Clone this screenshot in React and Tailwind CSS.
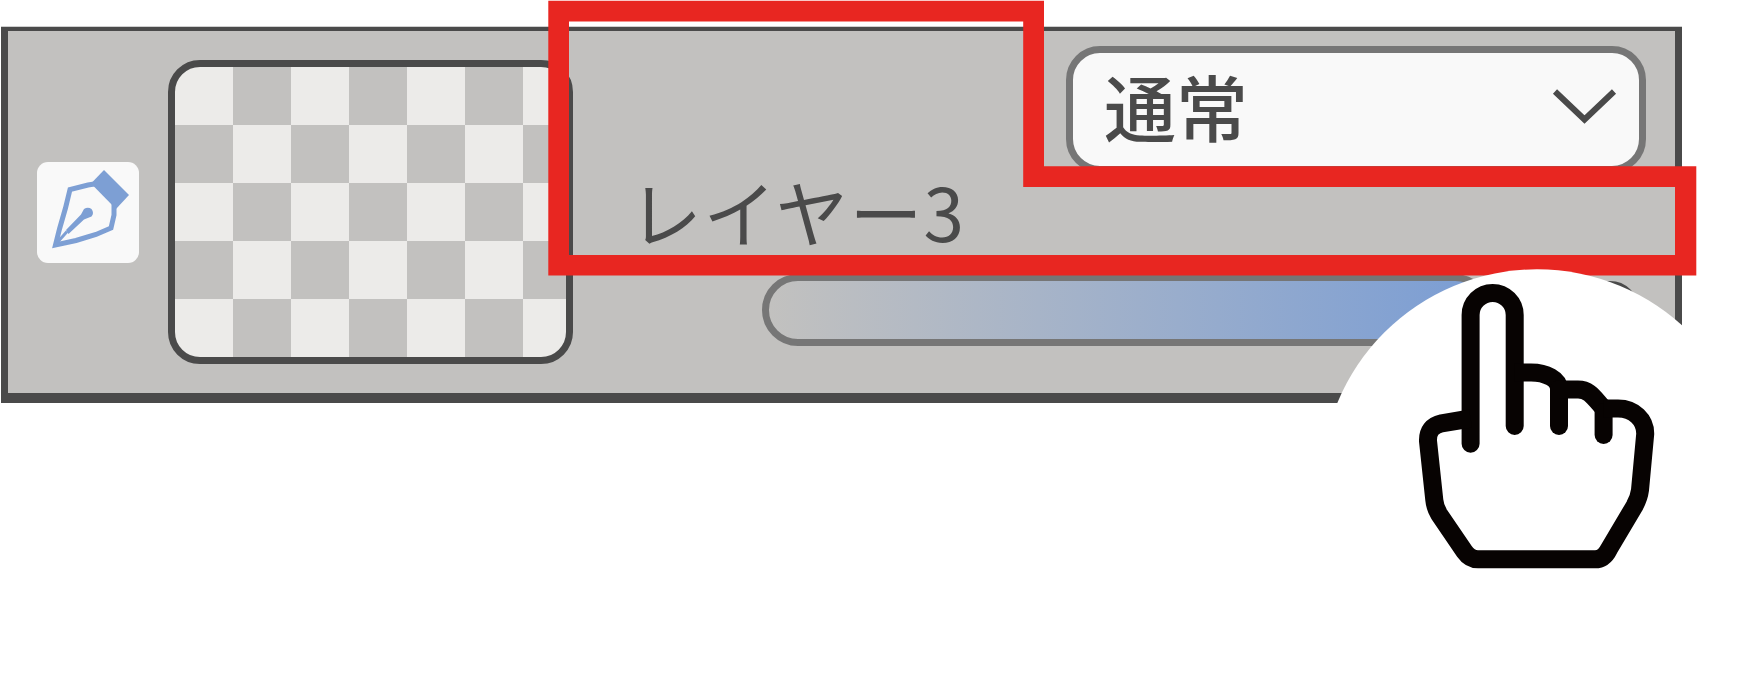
function PenBadge() {
  return (
    <div className="ml-[29px] h-[101px] w-[102px] shrink-0 rounded-[11px] bg-[#f9f9f9]">
      <svg className="block h-full w-full" viewBox="37 162 102 101" fill="none" stroke="#7d9fd4" strokeWidth="5">
        <path d="M104 182.500L88 185L70 189.500L65.500 208L59.500 229L55.500 245L76 240.500L96 234.500L111 228L114 215V204" />
        <path d="M56 244L67 231.500" strokeWidth="3" />
        <path d="M66 230L81 214.500L84 209Q88 206.500 91.500 209Q94.500 213 91.500 216.500L84 219.500L68.500 234Z" fill="#7d9fd4" stroke="none" />
        <path d="M104 170L129 195L116 209L91 183.500Z" fill="#7d9fd4" stroke="none" />
      </svg>
    </div>
  );
}

function Thumbnail() {
  return (
    <div className="mt-[29px] ml-[29px] h-[304px] w-[405px] shrink-0 self-start rounded-[32px] border-[7px] border-[#4a4a4a] bg-[conic-gradient(#c2c1bf_25%,#ecebe9_0_50%,#c2c1bf_0_75%,#ecebe9_0)] bg-[length:116px_116px] bg-origin-padding" />
  );
}

function BlendSelect() {
  return (
    <div className="flex h-[127px] w-[580px] items-center justify-between rounded-[34px] border-[7px] border-[#767676] bg-[#f9f9f9] pr-[21px] pb-[9px] pl-[31px]">
      <span className="text-[72px] leading-none font-medium whitespace-nowrap text-[#4a4a4a]">通常</span>
      <svg className="h-[40px] w-[68px]" viewBox="1550 86 68 40" fill="none" stroke="#4a4a4a" strokeWidth="6">
        <path d="M1555 92.500L1584.500 120.500L1614 92.500" />
      </svg>
    </div>
  );
}

function OpacitySlider() {
  return (
    <div className="ml-[122px] flex items-center">
      <div className="h-[72px] w-[729px] rounded-[36px] border-[7px] border-[#767676] bg-linear-to-r from-[#c2c1bf] to-[#7e9fd3] to-95%" />
      <div className="ml-[50px] h-[58px] w-[98px] rounded-[29px] border-[7px] border-[#4a4a4a]" />
    </div>
  );
}

function Annotation() {
  return (
    <svg className="pointer-events-none absolute inset-0 h-[700px] w-[1752px]" viewBox="0 0 1752 700">
      <path
        fill="#e82621"
        fillRule="evenodd"
        d="M548.300 .700H1044V166.200H1696.300V275.500H548.300ZM569 21.500V255H1675V187H1023.200V21.500Z"
      />
      <circle cx="1537" cy="485.300" r="216" fill="#fff" />
      <g fill="none" stroke="#070302" strokeWidth="18" strokeLinecap="round">
        <path d="M1470.600 443.700V315A22 22 0 0 1 1514.700 315V426" />
        <path strokeLinecap="butt" d="M1514.700 372.500H1531C1546 372.500 1559 379 1559 389V417" />
        <path d="M1559 389V426" />
        <path strokeLinecap="butt" d="M1559 389.500H1578C1590 389.500 1594 398 1605 410" />
        <path d="M1603.600 412V435" />
        <path strokeLinecap="butt" d="M1603.600 408.500H1618C1634 408.500 1645.500 420 1645.200 434L1640 490Q1639 498 1634.500 506L1609 549Q1604 559.300 1595 559.300H1478Q1470 559.300 1464.500 551.500L1439 514Q1435 507.500 1434.300 500L1428 441Q1427.500 426.500 1441.700 423.300L1470.600 418.500" />
      </g>
    </svg>
  );
}

export default function App() {
  return (
    <main className="relative h-[700px] w-[1752px] overflow-hidden bg-white pt-[26px] pl-px font-['Noto_Sans_CJK_JP',sans-serif]">
      <div className="h-px w-[1681px] bg-[#cfcfcf]" />
      <section className="flex h-[376px] w-[1681px] items-center border-x-[7px] border-t-[4px] border-b-[10px] border-[#4a4a4a] bg-[#c2c1bf]">
        <PenBadge />
        <Thumbnail />
        <div className="ml-[67px] flex h-full flex-1 flex-col pt-[15px]">
          <div className="self-end pr-[29px]">
            <BlendSelect />
          </div>
          <div className="h-[101px] pt-px">
            <span className="-ml-[11px] block text-[73px] leading-[72px] tracking-[1.2px] whitespace-nowrap text-[#4a4a4a]">レイヤー3</span>
          </div>
          <OpacitySlider />
        </div>
      </section>
      <Annotation />
    </main>
  );
}
